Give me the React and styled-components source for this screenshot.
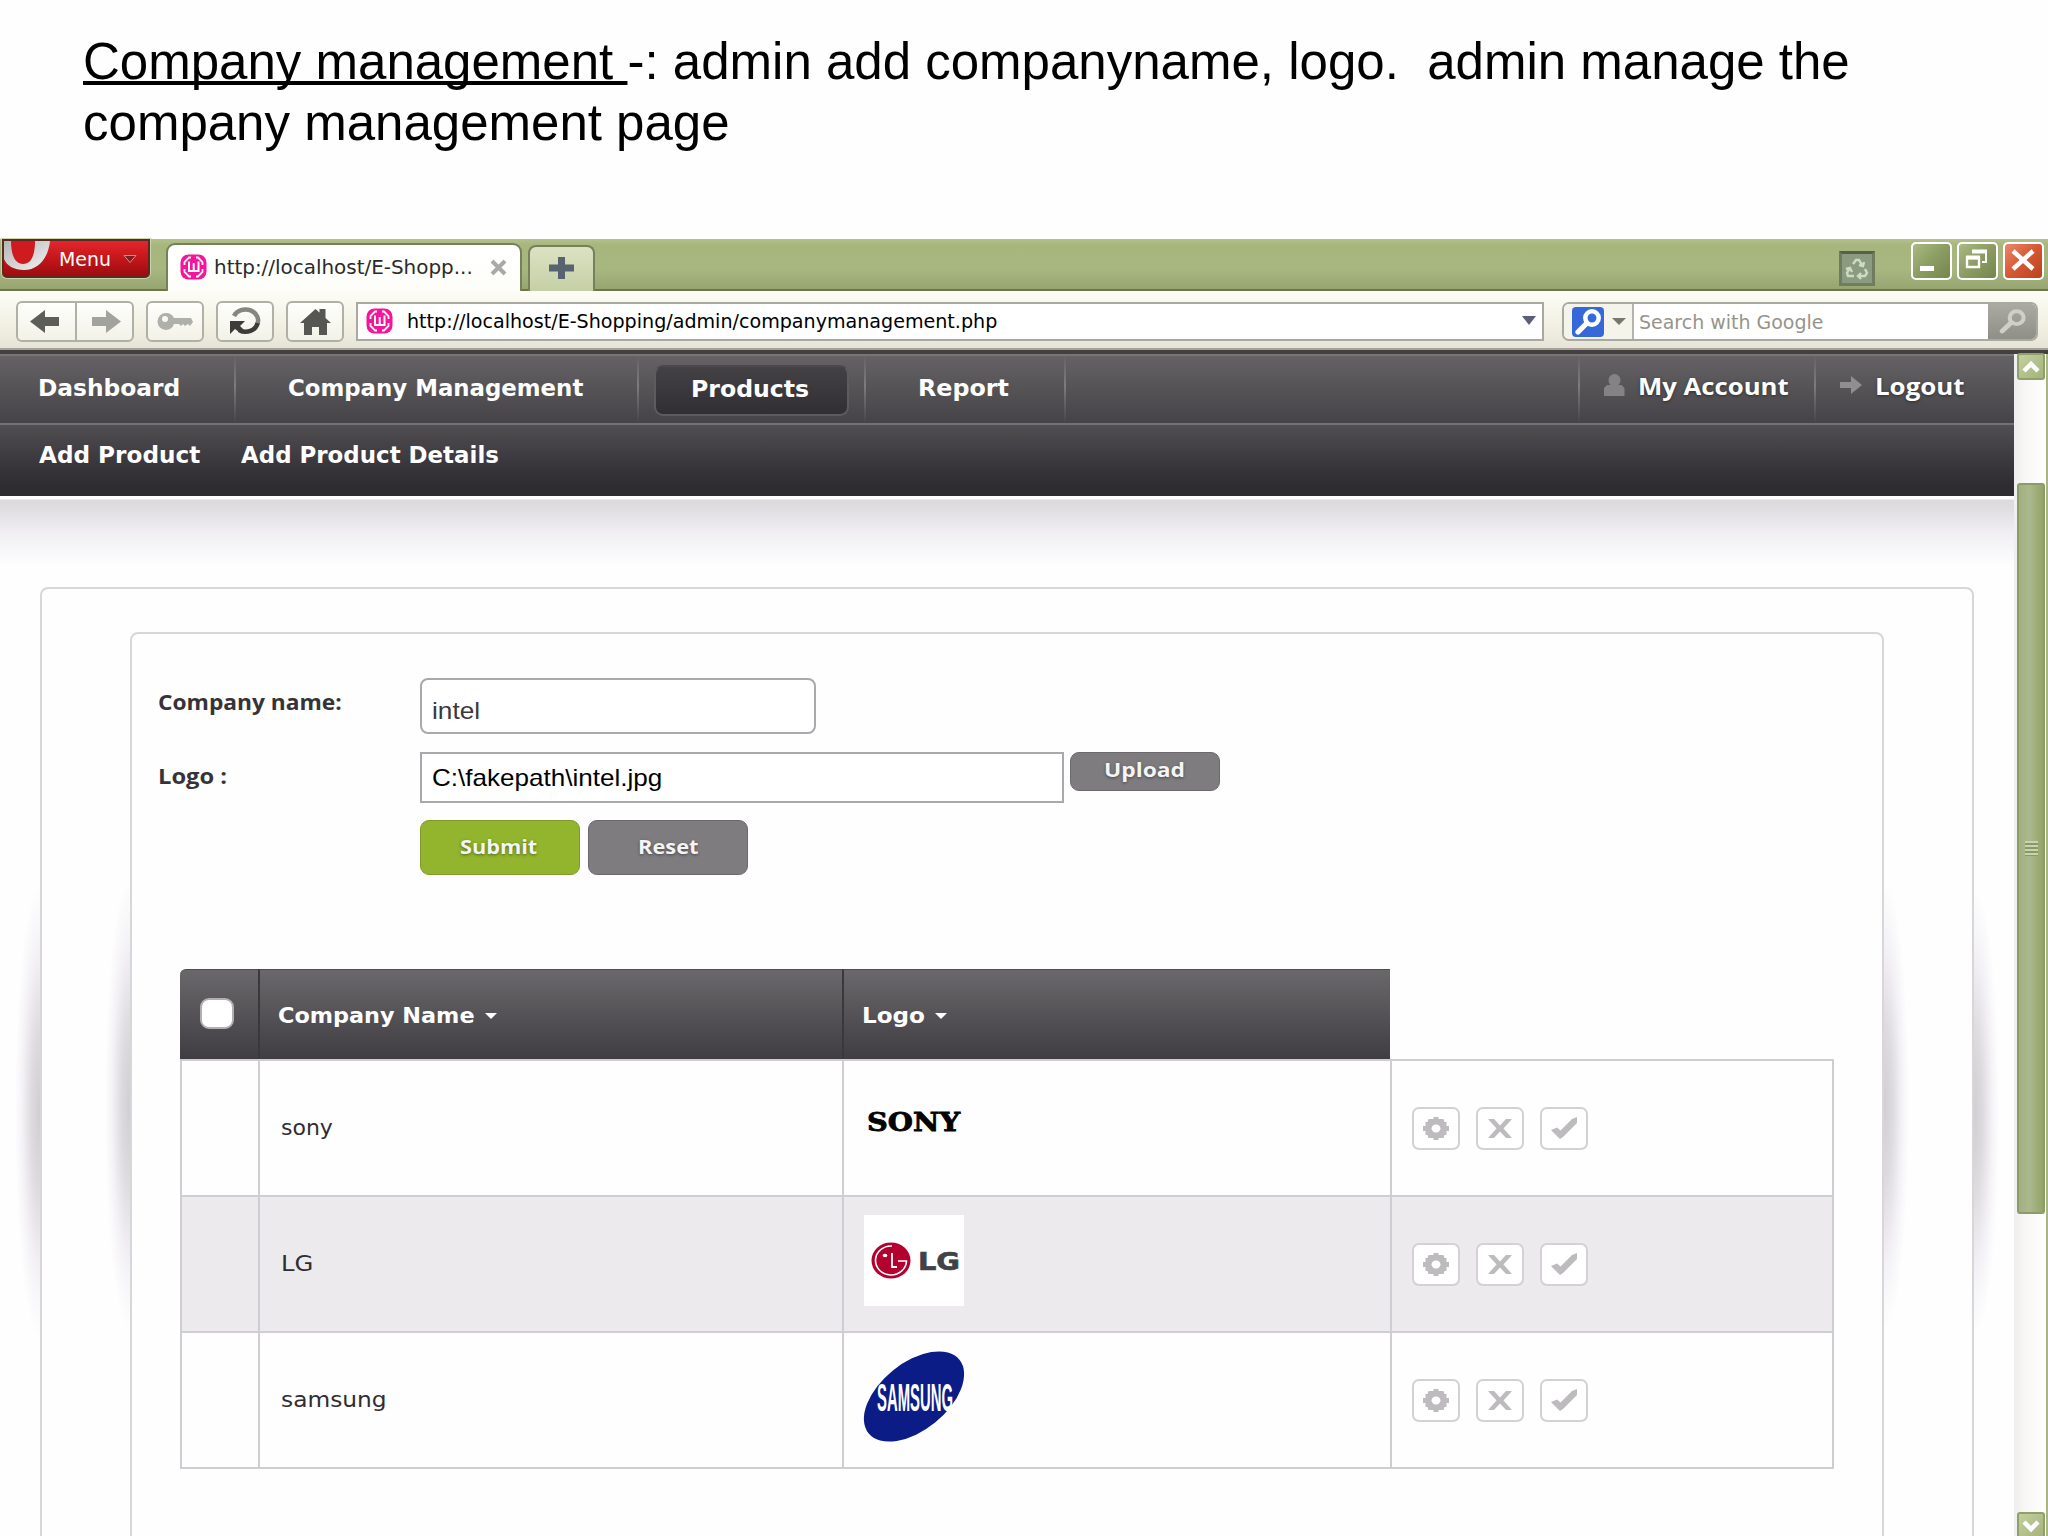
import React, { useLayoutEffect, useRef } from 'react';
import styled, { createGlobalStyle, css } from 'styled-components';

const verdana = '"DejaVu Sans", Verdana, sans-serif';
const arial = '"Liberation Sans", Arial, sans-serif';
const humanist = '"Open Sans", "Segoe UI", sans-serif';

// one line of text, stretched or squeezed to a known width
const FitText = ({ w, children, ...rest }) => {
	const ref = useRef(null);
	useLayoutEffect(() => {
		const el = ref.current;
		el.style.transform = `scaleX(${w / el.offsetWidth})`;
	}, [w, children]);
	return (
		<TextBox $w={w} {...rest}>
			<span ref={ref}>{children}</span>
		</TextBox>
	);
};

const TextBox = styled.span`
	display: block;
	flex: none;
	width: ${(p) => p.$w}px;
	height: 30px;
	line-height: 30px;
	margin: ${(p) => p.$m || '0'};
	font-family: ${(p) => p.$font || verdana};
	font-size: ${(p) => p.$size || 20}px;
	font-weight: ${(p) => (p.$bold ? 700 : 400)};
	color: ${(p) => p.$color || '#000'};
	text-shadow: ${(p) => (p.$shadow ? '0 1px 3px rgba(0, 0, 0, 0.45)' : 'none')};
	span {
		display: inline-block;
		white-space: pre;
		transform-origin: 0 50%;
	}
`;

const WampIcon = () => (
	<svg width="27" height="26" viewBox="0 0 27 26">
		<rect x="0.5" y="0.5" width="26" height="25" rx="8" fill="#f5149b" />
		<path
			d="M11 3.500H9L4.500 8v3M4.500 15v3L9 22.500h2M16 22.500h2l4.500-4.500v-3M22.500 11V8L18 3.500h-2"
			fill="none"
			stroke="#fff"
			strokeWidth="1.800"
		/>
		<path d="M9 7.500v9.500h9.500V7.500M13.700 9v7" fill="none" stroke="#fff" strokeWidth="2" />
	</svg>
);

const DownArrow = ({ w = 14, h = 9, color = '#5c5f7c' }) => (
	<svg width={w} height={h} viewBox="0 0 14 9" preserveAspectRatio="none">
		<path d="M0 0h14L7 9z" fill={color} />
	</svg>
);

const Magnifier = ({ w, h, color, sw = 4.5 }) => (
	<svg width={w} height={h} viewBox="0 0 26 26" preserveAspectRatio="none">
		<circle cx="17" cy="9" r="6.7" fill="none" stroke={color} strokeWidth={sw} />
		<path d="M11.5 14.5L3 23" stroke={color} strokeWidth={sw + 0.8} strokeLinecap="round" />
	</svg>
);

const TitleBar = () => (
	<TitleStrip>
		<OperaMenu>
			<svg width="50" height="36" viewBox="0 0 50 36">
				<defs>
					<linearGradient id="silver" x1="0" y1="0" x2="1" y2="1">
						<stop offset="0" stopColor="#b5b5b5" />
						<stop offset="1" stopColor="#f3f3f3" />
					</linearGradient>
				</defs>
				<path d="M0 0h46C44 18 34 29 20 29 10 29 3 25 0 18z" fill="url(#silver)" />
				<path d="M7 0h24c0 15-4 23-12 23S7 14 7 0z" fill="#cf1a1f" />
			</svg>
			<FitText w={52} $size={20} $color="#fff" $m="0 12px 0 5px">Menu</FitText>
			<svg width="14" height="10" viewBox="0 0 14 10">
				<path d="M1 1.5h12L7 8.5z" fill="#7d2020" stroke="#d98a8a" strokeWidth="1" />
			</svg>
		</OperaMenu>
		<Tab>
			<WampIcon />
			<FitText w={259} $size={20} $color="#2a2a2a" $m="0 17px 0 7px">http://localhost/E-Shopp...</FitText>
			<svg width="17" height="15" viewBox="0 0 17 15">
				<path d="M2 1l13 13M15 1L2 14" stroke="#a9aaa8" strokeWidth="4" />
			</svg>
		</Tab>
		<NewTab>
			<svg width="25" height="22" viewBox="0 0 25 22">
				<path d="M9 0h7v7.5h9v7h-9V22H9v-7.500H0v-7h9z" fill="#59626f" />
			</svg>
		</NewTab>
		<TrashButton>
			<svg width="24" height="21" viewBox="0 0 24 21" fill="none" stroke="#cfdac4" strokeWidth="2.4">
				<path d="M8 6l3-4h3l3 5M14 7l4 1 1-4M20 11l2 4-2 3h-6M16 15l-3 3 3 3M9 18H3l-1-3 3-5M1 11l4-1 2 4" />
			</svg>
		</TrashButton>
		<WindowButton>
			<svg width="36" height="33" viewBox="0 0 36 33">
				<path d="M7 22h14v5H7z" fill="#fff" />
			</svg>
		</WindowButton>
		<WindowButton>
			<svg width="36" height="33" viewBox="0 0 36 33" fill="none" stroke="#fff">
				<path d="M14 7h13v11h-4" strokeWidth="2" />
				<path d="M13 7.500h15" strokeWidth="4" />
				<path d="M8 14h12v9H8z" strokeWidth="2.400" />
				<path d="M7 13.500h14" strokeWidth="4" />
			</svg>
		</WindowButton>
		<WindowButton $close>
			<svg width="36" height="33" viewBox="0 0 36 33">
				<path d="M8 7l20 18M28 7L8 25" stroke="#fff" strokeWidth="4.500" />
			</svg>
		</WindowButton>
	</TitleStrip>
);

const AddressBar = () => (
	<Toolbar>
		<ToolButton $w={59} $side="left">
			<svg width="29" height="23" viewBox="0 0 29 23">
				<path d="M0 11.500L15 0v7h14v9H15v7z" fill="#5d5e59" />
			</svg>
		</ToolButton>
		<ToolButton $w={59} $side="right">
			<svg width="29" height="23" viewBox="0 0 29 23">
				<path d="M29 11.500L14 0v7H0v9h14v7z" fill="#a3a39e" />
			</svg>
		</ToolButton>
		<ToolButton $w={58} $ml={12}>
			<svg width="37" height="19" viewBox="0 0 37 19">
				<path
					d="M9 1a8 8 0 100 17 9 9 0 008-6h5l2 2 2-2 2 2 3-2 2 2 3-4-2-4H17A9 9 0 009 1zM8 4a3 3 0 110 6 3 3 0 010-6z"
					fill="#b0b0aa"
					fillRule="evenodd"
				/>
			</svg>
		</ToolButton>
		<ToolButton $w={58} $ml={12}>
			<svg width="33" height="29" viewBox="0 0 33 29">
				<path d="M5 9A12 10.500 0 1128 18" fill="none" stroke="#85867f" strokeWidth="4.500" />
				<path d="M28.500 16A12 10.500 0 0110 23" fill="none" stroke="#3c3d38" strokeWidth="4.500" />
				<path d="M1 14h15l-5 5 4 4-5 2-4-3-5 5z" fill="#3c3d38" />
			</svg>
		</ToolButton>
		<ToolButton $w={58} $ml={12}>
			<svg width="31" height="27" viewBox="0 0 31 27">
				<path d="M0 15L15.500 1l4 3.500V1h6v9L31 15h-4v12h-8v-8h-7v8H4V15z" fill="#565752" />
			</svg>
		</ToolButton>
		<AddressField>
			<WampIcon />
			<FitText w={590} $size={20} $m="0 auto 0 14px">http://localhost/E-Shopping/admin/companymanagement.php</FitText>
			<DownArrow />
		</AddressField>
		<SearchBox>
			<SearchEngine>
				<BlueBadge>
					<Magnifier w={26} h={26} color="#fff" />
				</BlueBadge>
				<DownArrow w={14} h={7} color="#77776f" />
			</SearchEngine>
			<SearchField>
				<FitText w={184} $size={20} $color="#96948a">Search with Google</FitText>
			</SearchField>
			<SearchGo>
				<Magnifier w={27} h={25} color="#cfcfc9" sw={4} />
			</SearchGo>
		</SearchBox>
	</Toolbar>
);

const Nav = () => (
	<NavBlock>
		<NavRow>
			<NavItem $w={236}>
				<FitText w={142} $size={23} $bold $color="#fff" $m="-3px 0 0 38px">Dashboard</FitText>
			</NavItem>
			<NavItem $w={403}>
				<FitText w={295} $size={23} $bold $color="#fff" $m="-3px 0 0 52px">Company Management</FitText>
			</NavItem>
			<NavItem $w={227}>
				<ActiveItem>
					<FitText w={118} $size={23} $bold $color="#fff" $m="-4px 3px 0 0">Products</FitText>
				</ActiveItem>
			</NavItem>
			<NavItem $w={200}>
				<FitText w={91} $size={23} $bold $color="#fff" $m="-3px 0 0 52px">Report</FitText>
			</NavItem>
			<NavItem $w={514} />
			<NavItem $w={236}>
				<NavIcon>
					<svg width="21" height="22" viewBox="0 0 21 22">
						<path d="M10.500 0a6 6 0 016 6c0 2-1 4-2 5h3l3 3v8H0v-8l3-3h3.500c-1-1-2-3-2-5a6 6 0 016-6z" fill="#838284" />
					</svg>
				</NavIcon>
				<FitText w={151} $size={23} $font={humanist} $bold $shadow $color="#fff" $m="-7px 0 0 13px">My Account</FitText>
			</NavItem>
			<NavItem $w={198} $last>
				<NavIcon>
					<svg width="22" height="18" viewBox="0 0 22 18">
						<path d="M22 9L11 0v6H0v6h11v6z" fill="#8f8e90" />
					</svg>
				</NavIcon>
				<FitText w={90} $size={23} $font={humanist} $bold $shadow $color="#fff" $m="-7px 0 0 13px">Logout</FitText>
			</NavItem>
		</NavRow>
		<SubRow>
			<FitText w={161} $size={23} $bold $color="#fff">Add Product</FitText>
			<FitText w={258} $size={23} $bold $color="#fff">Add Product Details</FitText>
		</SubRow>
	</NavBlock>
);

const CompanyForm = () => (
	<Form>
		<FitText w={184} $size={22} $font={humanist} $bold $color="#363338" $m="8px 0 0">Company name:</FitText>
		<Field $w={396} $h={56} $round>
			<FitText w={48} $size={24} $font={arial} $color="#3a383c" $m="10px 0 0">intel</FitText>
		</Field>
		<FitText w={69} $size={22} $font={humanist} $bold $color="#363338" $m="8px 0 0">Logo :</FitText>
		<FieldGroup>
			<Field $w={644} $h={51}>
				<FitText w={230} $size={24} $font={arial}>C:\fakepath\intel.jpg</FitText>
			</Field>
			<Button $w={150} $h={39}>
				<FitText w={81} $size={20} $font={humanist} $bold $shadow $color="#f4f4f4" $m="-3px 2px 0 0">Upload</FitText>
			</Button>
		</FieldGroup>
		<FieldGroup $row={3}>
			<Button $w={160} $h={55} $green>
				<FitText w={77} $size={20} $font={humanist} $bold $shadow $color="#f4f4f4" $m="-2px 3px 0 0">Submit</FitText>
			</Button>
			<Button $w={160} $h={55}>
				<FitText w={60} $size={20} $font={humanist} $bold $shadow $color="#f4f4f4" $m="-2px 1px 0 0">Reset</FitText>
			</Button>
		</FieldGroup>
	</Form>
);

const SonyLogo = () => (
	<svg width="100" height="91" viewBox="0 0 100 91">
		<text
			x="3"
			y="52"
			textLength="93"
			lengthAdjust="spacingAndGlyphs"
			fontFamily="DejaVu Serif, serif"
			fontWeight="700"
			fontSize="26"
			stroke="#000"
			strokeWidth="0.8"
		>
			SONY
		</text>
	</svg>
);

const LgLogo = () => (
	<svg width="100" height="91" viewBox="0 0 100 91">
		<path d="M0 0h100v91H0z" fill="#fff" />
		<ellipse cx="27" cy="45.500" rx="19.500" ry="18" fill="#b3002f" />
		<path d="M28 31A15.500 14.500 0 1042.500 46H34" fill="none" stroke="#fff" strokeWidth="1.600" />
		<path d="M28 38v14h5" fill="none" stroke="#fff" strokeWidth="1.800" />
		<ellipse cx="21" cy="40.500" rx="2.300" ry="1.800" fill="#fff" />
		<text x="54" y="55" textLength="42" lengthAdjust="spacingAndGlyphs" fontFamily="DejaVu Sans" fontWeight="700" fontSize="25" fill="#3f4246" stroke="#3f4246" strokeWidth="0.7">
			LG
		</text>
	</svg>
);

const SamsungLogo = () => (
	<svg width="100" height="92" viewBox="0 0 100 92">
		<ellipse cx="50" cy="45.500" rx="58.500" ry="33.500" transform="rotate(-39 50 45.500)" fill="#0c1c87" />
		<text x="13" y="60" textLength="76" lengthAdjust="spacingAndGlyphs" fontFamily="Liberation Sans" fontWeight="700" fontSize="39" fill="#fff">
			SAMSUNG
		</text>
	</svg>
);

const GearIcon = () => (
	<svg width="26" height="23" viewBox="0 0 26 23">
		<path
			d="M10.500 0h5v2h5l1 3h2v4H26v5h-2.500v4h-2l-1 3h-5v2h-5v-2h-5l-1-3h-2v-4H0V9h2.500V5h2l1-3h5z"
			fill="#bdbbbe"
		/>
		<ellipse cx="13" cy="11.500" rx="4.500" ry="4" fill="#fff" />
	</svg>
);

const CrossIcon = () => (
	<svg width="24" height="19" viewBox="0 0 24 19">
		<path d="M0 0h6l6 6.500L18 0h6l-8.500 9.500L24 19h-6l-6-6.500L6 19H0l8.500-9.500z" fill="#bdbbbe" />
	</svg>
);

const CheckIcon = () => (
	<svg width="26" height="22" viewBox="0 0 26 22">
		<path d="M0 13l6-2.500 3.500 3L21 2l5-2v6L12 20l-3 2z" fill="#bdbbbe" />
	</svg>
);

const companies = [
	{ name: 'sony', width: 52, Logo: SonyLogo },
	{ name: 'LG', width: 32, Logo: LgLogo },
	{ name: 'samsung', width: 106, Logo: SamsungLogo },
];

const CompanyTable = () => (
	<div>
		<HeadRow>
			<HeadCell>
				<Checkbox />
			</HeadCell>
			<HeadCell>
				<FitText w={197} $size={22} $bold $color="#fff">Company Name</FitText>
				<DownArrow w={12} h={6} color="#fff" />
			</HeadCell>
			<HeadCell>
				<FitText w={63} $size={22} $bold $color="#fff">Logo</FitText>
				<DownArrow w={12} h={6} color="#fff" />
			</HeadCell>
		</HeadRow>
		<Body>
			{companies.map(({ name, width, Logo }) => (
				<Row key={name}>
					<Cell />
					<Cell>
						<FitText w={width} $size={22} $color="#2f2d31" $m="0 0 0 1px">{name}</FitText>
					</Cell>
					<Cell $logo>
						<Logo />
					</Cell>
					<Cell>
						<Action><GearIcon /></Action>
						<Action><CrossIcon /></Action>
						<Action><CheckIcon /></Action>
					</Cell>
				</Row>
			))}
		</Body>
	</div>
);

const Scrollbar = () => (
	<Track>
		<ScrollButton>
			<svg width="18" height="12" viewBox="0 0 18 12">
				<path d="M2 10l7-7 7 7" fill="none" stroke="#fff" strokeWidth="4.500" />
			</svg>
		</ScrollButton>
		<Thumb>
			<Grip />
		</Thumb>
		<ScrollButton>
			<svg width="18" height="12" viewBox="0 0 18 12">
				<path d="M2 2l7 7 7-7" fill="none" stroke="#fff" strokeWidth="4.500" />
			</svg>
		</ScrollButton>
	</Track>
);

const App = () => (
	<Slide>
		<GlobalStyle />
		<Heading>
			<u>Company management </u>
			{'-: admin add companyname, logo.  admin manage the\ncompany management page'}
		</Heading>
		<TitleBar />
		<AddressBar />
		<Viewport>
			<Page>
				<Nav />
				<Backdrop>
					<OuterPanel>
						<InnerPanel>
							<CompanyForm />
							<CompanyTable />
						</InnerPanel>
					</OuterPanel>
				</Backdrop>
			</Page>
			<Scrollbar />
		</Viewport>
	</Slide>
);

const GlobalStyle = createGlobalStyle`
	* {
		box-sizing: border-box;
	}
	body {
		margin: 0;
		background: #fefefe;
	}
	svg {
		display: block;
		flex: none;
		overflow: visible;
	}
`;

const Slide = styled.div`
	display: flex;
	flex-direction: column;
	width: 2048px;
	height: 1536px;
	overflow: hidden;
	background: #fefefe;
`;

const Heading = styled.h1`
	flex: none;
	height: 239px;
	margin: 0;
	padding: 31px 0 0 83px;
	font: 400 51.030px/61.4px ${arial};
	color: #000;
	white-space: pre;
	u {
		text-decoration-skip-ink: none;
		text-decoration-thickness: 3.500px;
	}
`;

const TitleStrip = styled.div`
	display: flex;
	align-items: flex-start;
	flex: none;
	height: 52px;
	border-bottom: 2px solid #6d7550;
	background: linear-gradient(#b3c08c, #a7b67d 12%, #a8b680 60%, #97a571);
`;

const OperaMenu = styled.div`
	display: flex;
	align-items: center;
	flex: none;
	width: 148px;
	height: 39px;
	margin-left: 2px;
	border: 2px solid #5b2a22;
	border-radius: 0 0 5px 5px;
	box-shadow: 0 0 0 1px #c9d3ac;
	background: linear-gradient(#e2272b, #c4161b 50%, #9c0c10);
`;

const Tab = styled.div`
	display: flex;
	align-items: center;
	flex: none;
	width: 356px;
	height: 50px;
	margin: 4px 0 0 16px;
	padding-left: 12px;
	padding-bottom: 4px;
	border: 2px solid #76805b;
	border-bottom: 0;
	border-radius: 9px 9px 0 0;
	background: linear-gradient(#fff, #fdfdf8);
`;

const NewTab = styled.div`
	display: flex;
	align-items: center;
	justify-content: center;
	flex: none;
	width: 67px;
	height: 46px;
	margin: 6px auto 0 6px;
	padding-bottom: 2px;
	border: 2px solid #76805b;
	border-bottom: 0;
	border-radius: 8px 8px 0 0;
	background: linear-gradient(#dbe2c2, #c5d0a6);
`;

const TrashButton = styled.div`
	display: flex;
	align-items: center;
	justify-content: center;
	width: 36px;
	height: 35px;
	margin: 12px 36px 0 0;
	border: 3px solid #6f7d5e;
	border-top-color: #56614a;
	background: #8a9b80;
`;

const WindowButton = styled.div`
	width: 41px;
	height: 38px;
	margin: 3px 5px 0 0;
	border: 2px solid #fff;
	border-radius: 5px;
	background: linear-gradient(135deg, #a9ba82, #8b9d62 50%, #75864d);
	${(p) =>
		p.$close &&
		css`
			margin-right: 4px;
			background: linear-gradient(135deg, #e8896a, #d65733 50%, #b8421f);
		`}
`;

const Toolbar = styled.div`
	display: flex;
	flex: none;
	height: 63px;
	padding: 10px 0 0 16px;
	border-bottom: 4px solid #43403e;
	box-shadow: inset 0 -2px 0 #a5a29a;
	background: linear-gradient(#fdfdf6, #f2f1e4 55%, #e5e3d5);
`;

const ToolButton = styled.div`
	display: flex;
	align-items: center;
	justify-content: center;
	flex: none;
	width: ${(p) => p.$w}px;
	height: 41px;
	margin-left: ${(p) => p.$ml || 0}px;
	border: 2px solid #b1b0a6;
	border-radius: 6px;
	background: linear-gradient(#fefefb, #f3f2e8);
	${(p) => p.$side === 'left' && 'border-right: 0; border-radius: 6px 0 0 6px; padding-right: 4px;'}
	${(p) => p.$side === 'right' && 'border-radius: 0 6px 6px 0; padding-left: 3px;'}
`;

const AddressField = styled.div`
	display: flex;
	align-items: center;
	flex: none;
	width: 1188px;
	height: 39px;
	margin: 1px 18px 0 12px;
	padding: 0 6px 2px 8px;
	border: 2px solid #a9a9a2;
	background: #fff;
`;

const SearchBox = styled.div`
	display: flex;
	width: 476px;
	height: 39px;
	margin-top: 1px;
	border: 2px solid #a9a9a2;
	border-radius: 7px;
	overflow: hidden;
	background: #fff;
`;

const SearchEngine = styled.div`
	display: flex;
	align-items: center;
	gap: 8px;
	width: 70px;
	padding-left: 8px;
	border-right: 2px solid #b5b5ac;
	background: #f4f4ea;
`;

const BlueBadge = styled.div`
	display: flex;
	align-items: center;
	justify-content: center;
	width: 32px;
	height: 30px;
	border-radius: 4px;
	background: #3568d8;
`;

const SearchField = styled.div`
	display: flex;
	align-items: center;
	flex: 1;
	padding-left: 5px;
`;

const SearchGo = styled.div`
	display: flex;
	align-items: center;
	justify-content: center;
	width: 48px;
	background: linear-gradient(#aaaaa2, #8f8f87);
`;

const Viewport = styled.div`
	display: flex;
	flex: 1;
	min-height: 0;
`;

const Page = styled.div`
	width: 2014px;
	overflow: hidden;
`;

const NavBlock = styled.div`
	height: 142px;
	background: #454347;
`;

const NavRow = styled.div`
	display: flex;
	height: 69px;
	border-top: 2px solid #777577;
	background: linear-gradient(#646264, #454347);
`;

const NavItem = styled.div`
	display: flex;
	align-items: center;
	flex: none;
	width: ${(p) => p.$w}px;
	border-right: ${(p) => (p.$last ? '0' : '2px solid transparent')};
	border-image: ${(p) => (p.$last ? 'none' : 'linear-gradient(#646264, #7d7b7e 45%, #454347) 1')};
	border-top-width: 0;
`;

const ActiveItem = styled.div`
	display: flex;
	align-items: center;
	justify-content: center;
	width: 195px;
	height: 51px;
	margin: 2px 0 0 15px;
	border: 2px solid #5d5b5e;
	border-top-color: #4a484b;
	border-radius: 9px;
	background: linear-gradient(#434144, #312f33);
`;

const NavIcon = styled.span`
	margin: -9px 0 0 24px;
`;

const SubRow = styled.div`
	display: flex;
	gap: 41px;
	height: 73px;
	padding: 15px 0 0 39px;
	border-top: 2px solid #737173;
	background: linear-gradient(#504e51, #3b393d 50%, #2e2c30 85%);
`;

const Backdrop = styled.div`
	padding: 91px 0 0 40px;
	background: linear-gradient(#fefefe 3px, #dcdadd 4px, #dfdde0 12px, #f1eff3 38px, #fefefe 70px);
`;

const sideShadows = css`
	&::before,
	&::after {
		content: '';
		position: absolute;
		top: ${(p) => p.$shadowTop}px;
		width: 25px;
		height: 450px;
	}
	&::before {
		right: calc(100% + 2px);
		background: radial-gradient(ellipse 25px 225px at 100% 50%, #d0ced2, #dddbde 35%, #f3f1f5 70%, #fefefe);
	}
	&::after {
		left: calc(100% + 2px);
		background: radial-gradient(ellipse 25px 225px at 0 50%, #d0ced2, #dddbde 35%, #f3f1f5 70%, #fefefe);
	}
`;

const Panel = styled.div`
	position: relative;
	border: 2px solid #d8d6d9;
	border-radius: 8px;
	background: #fefefe;
	${sideShadows}
`;

const OuterPanel = styled(Panel).attrs({ $shadowTop: 298 })`
	width: 1934px;
	height: 1000px;
	padding: 43px 0 0 88px;
`;

const InnerPanel = styled(Panel).attrs({ $shadowTop: 246 })`
	width: 1754px;
	height: 1000px;
	padding: 44px 0 0 48px;
`;

const Form = styled.div`
	display: grid;
	grid-template-columns: 262px 1fr;
	grid-template-rows: 74px 68px 55px;
	height: 291px;
	margin-left: -22px;
`;

const FieldGroup = styled.div`
	display: flex;
	align-items: flex-start;
	gap: ${(p) => (p.$row ? 8 : 6)}px;
	grid-column: 2;
	grid-row: ${(p) => p.$row || 'auto'};
`;

const Field = styled.div`
	display: flex;
	align-items: center;
	width: ${(p) => p.$w}px;
	height: ${(p) => p.$h}px;
	padding-left: 10px;
	border: 2px solid #aaa8ac;
	border-radius: ${(p) => (p.$round ? 8 : 0)}px;
	background: #fff;
`;

const Button = styled.div`
	display: flex;
	align-items: center;
	justify-content: center;
	width: ${(p) => p.$w}px;
	height: ${(p) => p.$h}px;
	border: 1px solid ${(p) => (p.$green ? '#7e9c2c' : '#6b696c')};
	border-radius: 9px;
	background: ${(p) => (p.$green ? '#92b52d' : '#7f7c80')};
`;

const columns = css`
	display: grid;
	grid-template-columns: 78px 584px 548px 443px;
`;

const HeadRow = styled.div`
	${columns}
	height: 90px;
`;

const HeadCell = styled.div`
	display: flex;
	align-items: center;
	gap: 10px;
	padding: 2px 0 0 18px;
	border-left: 2px solid #3a383b;
	border-top: 1px solid #4f4d50;
	background: linear-gradient(#6a686b, #3f3d41);
	&:first-child {
		border-left: 0;
		border-radius: 6px 0 0 0;
	}
`;

const Checkbox = styled.div`
	width: 34px;
	height: 31px;
	margin: -5px 0 0 2px;
	border: 2px solid #b1afb2;
	border-radius: 9px;
	background: #fff;
`;

const Body = styled.div`
	width: 1654px;
	border-top: 2px solid #cfcdd1;
	border-right: 2px solid #cfcdd1;
`;

const Row = styled.div`
	${columns}
	height: 136px;
	&:nth-child(even) {
		background: #eceaed;
	}
`;

const Cell = styled.div`
	display: flex;
	align-items: ${(p) => (p.$logo ? 'flex-start' : 'center')};
	gap: 16px;
	padding: ${(p) => (p.$logo ? '18px' : '0')} 0 0 20px;
	border-left: 2px solid #cfcdd1;
	border-bottom: 2px solid #cfcdd1;
`;

const Action = styled.div`
	display: flex;
	align-items: center;
	justify-content: center;
	width: 48px;
	height: 43px;
	border: 2px solid #d3d1d4;
	border-radius: 7px;
	background: #fff;
`;

const Track = styled.div`
	display: flex;
	flex-direction: column;
	justify-content: space-between;
	width: 34px;
	padding-left: 3px;
	border-right: 2px solid #a9b684;
	background: linear-gradient(90deg, #eeeef0, #f7f6f4 30%, #fff);
`;

const ScrollButton = styled.div`
	display: flex;
	align-items: center;
	justify-content: center;
	flex: none;
	width: 28px;
	height: 27px;
	border: 2px solid #8fa06a;
	border-radius: 3px;
	background: linear-gradient(135deg, #c3cfa0, #a4b47b);
	&:first-child {
		margin-top: -1px;
	}
	&:last-child {
		margin-bottom: -3px;
	}
`;

const Thumb = styled.div`
	display: flex;
	align-items: center;
	justify-content: center;
	flex: none;
	width: 28px;
	height: 731px;
	margin: 103px 0 auto;
	border: 2px solid #8b9c68;
	border-radius: 3px;
	background: linear-gradient(90deg, #a3b083, #abb88c 45%, #94a468);
`;

const Grip = styled.div`
	width: 13px;
	height: 15px;
	background: repeating-linear-gradient(#c9d3b0 0 2px, #8a9a63 2px 4px);
`;

export default App;
